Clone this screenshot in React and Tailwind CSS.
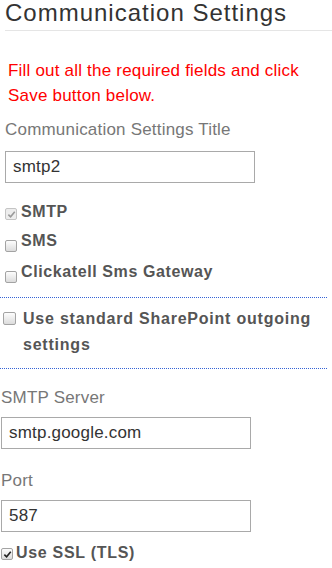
import React from 'react'

const font = { fontFamily: '"Liberation Sans", Arial, sans-serif' }

// Checkbox dibujado a mano para parecerse al nativo de IE/Chrome antiguo
const Box = ({ checked, disabled, className = '' }) => (
  <span
    className={
      'inline-flex items-center justify-center w-[12px] h-[12px] rounded-[2px] border shrink-0 ' +
      (disabled
        ? 'border-[#c4c4c4] bg-[#ededed] '
        : 'border-[#a3a3a3] bg-gradient-to-b from-[#fdfdfd] to-[#dcdcdc] ') +
      className
    }
  >
    {checked && (
      <svg viewBox="0 0 10 10" className="w-[9px] h-[9px]">
        <path
          d="M1.5 5.2 L4 7.6 L8.6 2"
          fill="none"
          stroke={disabled ? '#9a9a9a' : '#222'}
          strokeWidth="1.8"
        />
      </svg>
    )}
  </span>
)

const Field = ({ value, className = '' }) => (
  <div
    className={
      'w-[250px] h-[32px] border border-[#a9a9a9] flex items-center pl-[7px] text-[17px] tracking-[0.2px] text-[#333] ' +
      className
    }
  >
    {value}
  </div>
)

export default function App() {
  return (
    <div className="w-[332px] h-[568px] overflow-hidden bg-white" style={font}>
      <h1 className="ml-[5px] text-[24px] leading-[26px] pb-[4px] border-b border-[#e5e5e5] text-[#333] font-normal tracking-[1px]">
        Communication Settings
      </h1>

      <p className="mt-[27px] ml-[8px] text-[17px] leading-[25px] tracking-[0.2px] text-[#ff0000]">
        Fill out all the required fields and click
        <br />
        Save button below.
      </p>

      <div className="mt-[12px] ml-[5px] text-[17px] leading-[20px] tracking-[0.2px] text-[#777]">
        Communication Settings Title
      </div>
      <Field value="smtp2" className="mt-[11px] ml-[5px]" />

      <div className="mt-[19px] ml-[5px] flex items-end gap-[4px] text-[16px] leading-[20px] tracking-[0.6px] font-bold text-[#555]">
        <Box checked disabled className="mb-[2px]" />
        <span>SMTP</span>
      </div>
      <div className="mt-[9px] ml-[5px] flex items-end gap-[4px] text-[16px] leading-[20px] tracking-[0.6px] font-bold text-[#555]">
        <Box className="mb-[-1px]" />
        <span>SMS</span>
      </div>
      <div className="mt-[11px] ml-[5px] flex items-end gap-[4px] text-[16px] leading-[20px] tracking-[0.6px] font-bold text-[#555]">
        <Box className="mb-[-1px]" />
        <span>Clickatell Sms Gateway</span>
      </div>

      <div className="mt-[15px] w-[327px] border-t border-dotted border-[#3563d6]" />

      <div className="mt-[8px] ml-[3px] flex items-start gap-[7px] text-[16px] leading-[26px] tracking-[0.78px] font-bold text-[#555]">
        <Box className="mt-[6px] w-[13px] h-[13px]" />
        <span>
          Use standard SharePoint outgoing
          <br />
          settings
        </span>
      </div>

      <div className="mt-[10px] w-[327px] border-t border-dotted border-[#3563d6]" />

      <div className="mt-[19px] ml-[1px] text-[17px] leading-[20px] tracking-[0.2px] text-[#777]">SMTP Server</div>
      <Field value="smtp.google.com" className="mt-[9px] ml-[1px]" />

      <div className="mt-[22px] ml-[1px] text-[17px] leading-[20px] tracking-[0.2px] text-[#777]">Port</div>
      <Field value="587" className="mt-[9px] ml-[1px]" />

      <div className="mt-[11px] ml-[1px] flex items-end gap-[3px] text-[16px] leading-[20px] tracking-[0.7px] font-bold text-[#555]">
        <Box checked className="mb-[3px]" />
        <span>Use SSL (TLS)</span>
      </div>
    </div>
  )
}
